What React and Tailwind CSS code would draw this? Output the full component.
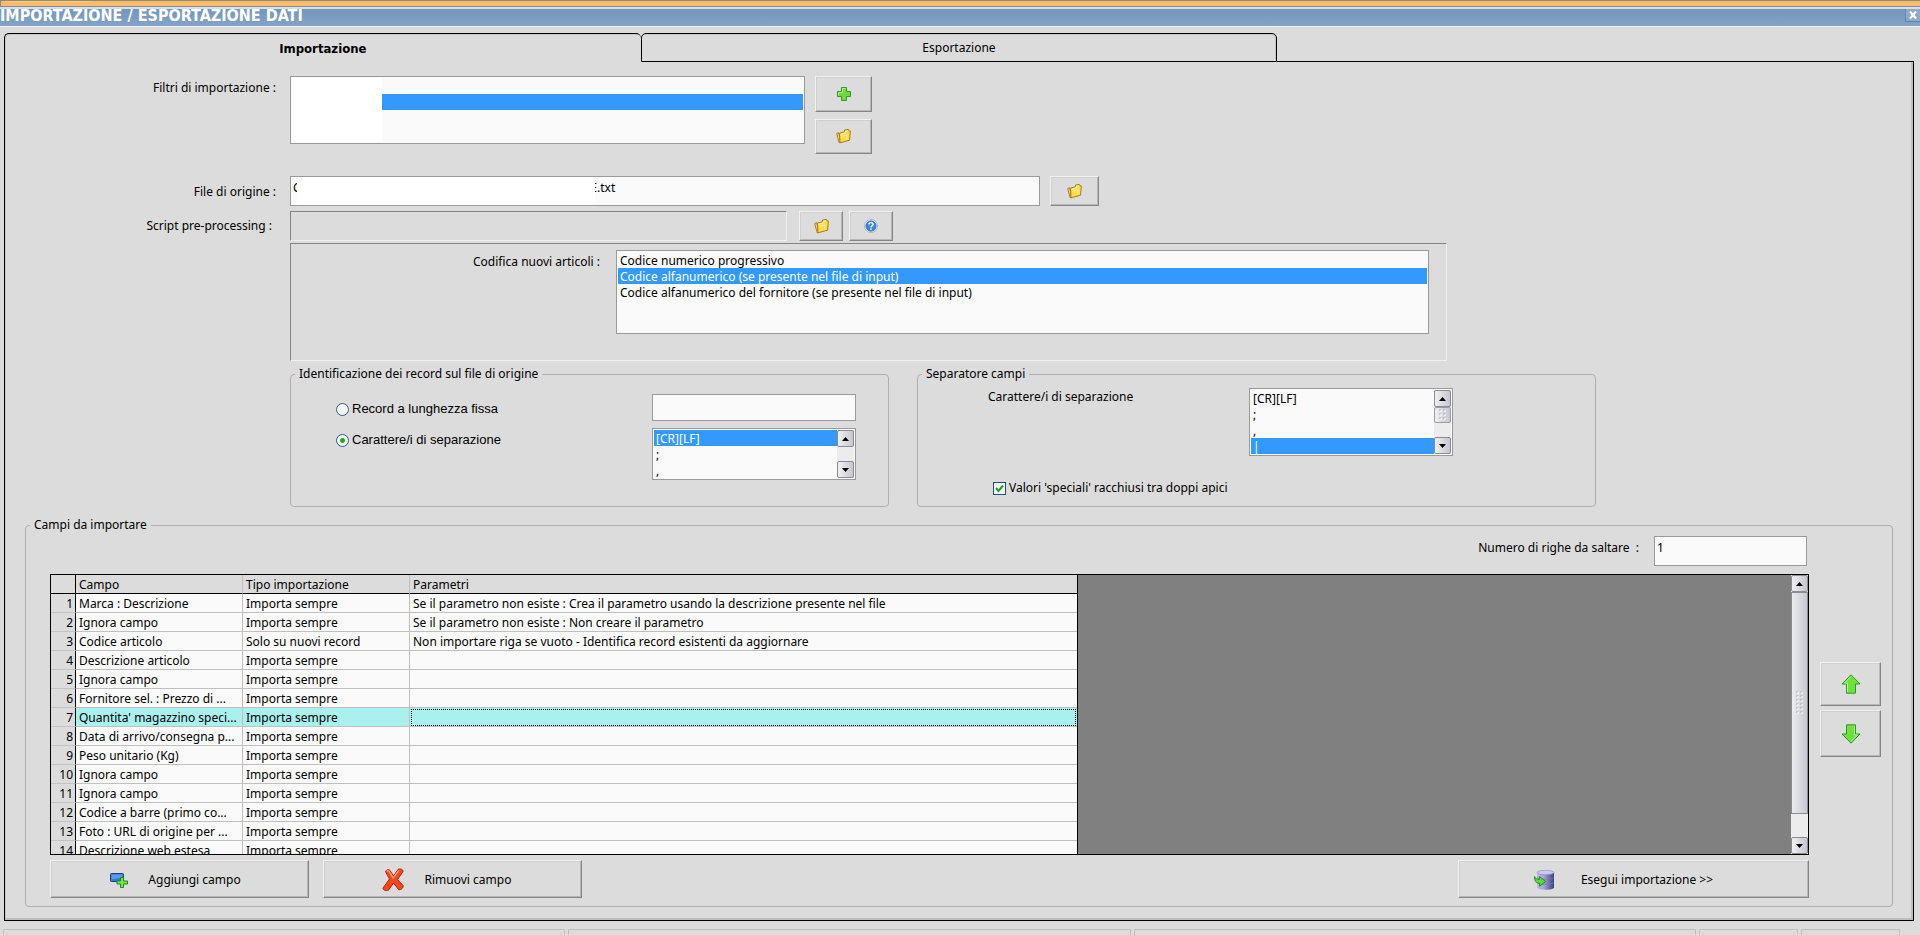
import React, { useState } from 'react';

const righe = [
  ['Marca : Descrizione', 'Importa sempre', 'Se il parametro non esiste : Crea il parametro usando la descrizione presente nel file'],
  ['Ignora campo', 'Importa sempre', 'Se il parametro non esiste : Non creare il parametro'],
  ['Codice articolo', 'Solo su nuovi record', 'Non importare riga se vuoto - Identifica record esistenti da aggiornare'],
  ['Descrizione articolo', 'Importa sempre', ''],
  ['Ignora campo', 'Importa sempre', ''],
  ['Fornitore sel. : Prezzo di ...', 'Importa sempre', ''],
  ["Quantita' magazzino speci...", 'Importa sempre', ''],
  ['Data di arrivo/consegna p...', 'Importa sempre', ''],
  ['Peso unitario (Kg)', 'Importa sempre', ''],
  ['Ignora campo', 'Importa sempre', ''],
  ['Ignora campo', 'Importa sempre', ''],
  ['Codice a barre (primo co...', 'Importa sempre', ''],
  ['Foto : URL di origine per ...', 'Importa sempre', ''],
  ['Descrizione web estesa', 'Importa sempre', ''],
];

function PlusIcon() {
  return (
    <svg width="14" height="14" viewBox="0 0 14 14" aria-hidden="true">
      <path d="M4.5.5h5v4h4v5h-4v4h-5v-4h-4v-5h4z" fill="#6fd93f" stroke="#2f9a1f" />
      <path d="M5.5 1.5h3M5.5 1.5v4h-4v3" fill="none" stroke="#b5f08f" />
    </svg>
  );
}

function FolderIcon() {
  return (
    <svg width="15" height="15" viewBox="0 0 15 15" aria-hidden="true">
      <path d="M.7 4.500l2-.8 1.800 9.500-1.200.8z" fill="#ffe98a" stroke="#a87b1c" strokeLinejoin="round" />
      <path d="M3.500 4.200l4.700-1.400.4-1.800 3.800-.6.4 1.300 1.500.3-.7 9.200-9.600 2.600z" fill="#fbdc4a" stroke="#a87b1c" strokeLinejoin="round" />
      <path d="M4.600 5.400l4.400-1.400.6-1.900 2.200-.3" fill="none" stroke="#fff6b8" />
      <path d="M5.500 7.400l5.500-1.600-.6 4.800" fill="none" stroke="#fff2a0" />
    </svg>
  );
}

function HelpIcon() {
  return (
    <svg width="14" height="14" viewBox="0 0 14 14" aria-hidden="true">
      <circle cx="7" cy="7" r="6.5" fill="#f2f5fa" stroke="#aab4c6" />
      <circle cx="7" cy="7" r="5.2" fill="#3f86d8" stroke="#2d6bb5" strokeWidth=".6" />
      <path d="M5 5.600c0-2.600 4-2.600 4-.2 0 1.500-2 1.400-2 3" fill="none" stroke="#fff" strokeWidth="1.400" />
      <path d="M6.200 9.400h1.600v1.400H6.200z" fill="#fff" />
    </svg>
  );
}

function AddFieldIcon() {
  return (
    <svg width="18" height="16" viewBox="0 0 18 16" aria-hidden="true">
      <rect x=".5" y="1.500" width="13" height="8" rx="1" fill="#2f78d0" stroke="#173f86" />
      <path d="M1.500 2.500h11v3l-11 2z" fill="#5b9be6" />
      <path d="M10.500 5.500h3v3.500h4v3h-4v3.500h-3V12h-3.500V9h3.500z" fill="#7be348" stroke="#1f8a1c" />
    </svg>
  );
}

function RemoveIcon() {
  return (
    <svg width="23" height="24" viewBox="0 0 23 24" aria-hidden="true">
      <path
        d="M3.500 3.500C4.500 1.500 7 1 8 2.500l3.500 5.500 4.500-6.500c1.500-1.400 5.500 0 5 2l-5.500 8 5.500 6c1 1.500-2 5-4.500 4L11.500 15 7 21.500c-1.500 2-6.500 1-6-1.500l6.500-9z"
        fill="#f8461c"
        stroke="#b3230c"
      />
      <path d="M5 3.500c1-1 1.600-.8 2.200 0l4 6.500 5.600-7.500" fill="none" stroke="#ff9a78" strokeWidth="1.500" />
    </svg>
  );
}

function DatabaseIcon() {
  return (
    <svg width="21" height="20" viewBox="0 0 21 20" aria-hidden="true">
      <defs>
        <linearGradient id="db" x1="0" x2="1">
          <stop offset="0" stopColor="#b9bbe6" />
          <stop offset=".4" stopColor="#a2a5dc" />
          <stop offset="1" stopColor="#3e3f7c" />
        </linearGradient>
      </defs>
      <path d="M3 2.500v15c0 3 17 3 17 0v-15z" fill="url(#db)" />
      <ellipse cx="11.500" cy="2.500" rx="8.500" ry="2.200" fill="#c9cbee" stroke="#8486bb" strokeWidth=".6" />
      <path d="M3 7.500c2 2.400 15 2.400 17 0M3 12.500c2 2.400 15 2.400 17 0" fill="none" stroke="#7577b4" strokeWidth=".7" />
      <path d="M.6 6.500c.4 2 2 2.800 5 2.800V6.600l6 4.900-6 4.700v-2.900C2 13.300.2 10.500.6 6.500z" fill="#5fdc34" stroke="#1f7f1a" strokeWidth=".9" />
    </svg>
  );
}

function ArrowIcon({ down }) {
  return (
    <svg width="20" height="20" viewBox="0 0 20 20" className={down ? 'rotate-180' : ''} aria-hidden="true">
      <path d="M10 .8l9 9.200h-4.500v9.200h-9V10H1z" fill="#6fe03c" stroke="#2f9a2a" />
      <path d="M10 2.600L3.800 9h2.700v9" fill="none" stroke="#b4f58e" />
    </svg>
  );
}

function Button3D({ className = '', children, ...props }) {
  return (
    <button
      type="button"
      className={`flex items-center justify-center border border-t-[#f2f2f2] border-l-[#f2f2f2] border-r-[#858585] border-b-[#858585] bg-[#dcdcdc] shadow-[inset_-1px_-1px_0_#b8b8b8,inset_1px_1px_0_#cfcfcf] ${className}`}
      {...props}
    >
      {children}
    </button>
  );
}

function ScrollButton({ down }) {
  return (
    <button
      type="button"
      aria-label={down ? 'Scorri giù' : 'Scorri su'}
      className="flex h-[17px] w-full shrink-0 items-center justify-center rounded-[2px] border border-[#8b8b90] bg-linear-to-r from-[#f0f0f4] to-[#c6c6d0]"
    >
      <svg width="7" height="4" viewBox="0 0 7 4" className={down ? 'rotate-180' : ''} aria-hidden="true">
        <path d="M3.500 0L7 4H0z" fill="#000" />
      </svg>
    </button>
  );
}

function Grip({ rows }) {
  return (
    <svg width="7" height={rows * 4} aria-hidden="true">
      {Array.from({ length: rows }, (_, i) => (
        <g key={i}>
          <path d={`M0 ${i * 4 + 1}h2M4 ${i * 4 + 1}h2`} stroke="#a9a9b2" />
          <path d={`M1 ${i * 4 + 2}h2M5 ${i * 4 + 2}h2`} stroke="#fff" />
        </g>
      ))}
    </svg>
  );
}

function ListBox({ options, selected, className = '', scrollbar, thumb, ...props }) {
  return (
    <div className={`flex border border-[#9a9a9a] bg-[#fafafa] p-px ${className}`}>
      <select
        size={4}
        defaultValue={selected}
        className="h-full min-w-0 flex-1 appearance-none overflow-hidden bg-transparent outline-none [scrollbar-width:none]"
        {...props}
      >
        {options.map((o) => (
          <option
            key={o}
            value={o}
            className="h-4 min-h-4 px-[2px] py-0 leading-4 checked:bg-[linear-gradient(#3399ff,#3399ff)] checked:[-webkit-text-fill-color:#fff]"
          >
            {o}
          </option>
        ))}
      </select>
      {scrollbar && (
        <div className="flex w-[17px] flex-col justify-between bg-[#ececec]">
          <ScrollButton />
          {thumb && (
            <div className="mb-auto flex h-4 items-center justify-center rounded-[2px] border border-[#9b9ba2] bg-linear-to-r from-[#f0f0f4] to-[#c6c6d0]">
              <Grip rows={3} />
            </div>
          )}
          <ScrollButton down />
        </div>
      )}
    </div>
  );
}

function GroupBox({ title, className = '', children }) {
  return (
    <fieldset className={`min-w-0 rounded-[4px] border border-[#b0b0b0] ${className}`}>
      <legend className="ml-1 px-1 leading-4">{title}</legend>
      {children}
    </fieldset>
  );
}

function App() {
  const [tipo, setTipo] = useState('separatore');

  const labelCol = 'w-[285px] shrink-0 pr-[14px] text-right';
  const radio =
    'size-[13px] shrink-0 appearance-none rounded-full border border-[#2f5c85] bg-[#f6f6f6] checked:bg-[radial-gradient(circle,#2aa52a_0_2px,#f6f6f6_3px)]';

  return (
    <div className="flex min-h-screen flex-col overflow-hidden bg-[#dcdcdc] font-['Noto_Sans','DejaVu_Sans_Condensed',sans-serif] text-[12px] leading-4 text-black">
      <div className="h-[7px] border-y border-l border-[#8a8a8a] bg-[#ffbb66]">
        <div className="ml-1 h-px w-[85px] bg-[#ffd27a]" />
      </div>
      <header className="flex h-5 items-start justify-between border-t-2 border-b border-t-[#cfe0f2] border-b-[#eef3f8] bg-linear-to-b from-[#7496bc] to-[#84a4c6]">
        <h1 className="font-['DejaVu_Sans_Condensed',sans-serif] text-[16px] leading-[14px] font-bold text-white">IMPORTAZIONE / ESPORTAZIONE DATI</h1>
        <button
          type="button"
          aria-label="Chiudi"
          className="flex h-[13px] w-[15px] items-center justify-center border-b border-l border-[#6285ab] bg-[#8fabc9]"
        >
          <svg width="8" height="8" viewBox="0 0 8 8" aria-hidden="true">
            <path d="M1 .5l6 7M7 .5l-6 7" stroke="#fff" strokeWidth="2" />
          </svg>
        </button>
      </header>

      <main className="mt-[6px] mr-[6px] ml-1">
        <div role="tablist" className="flex h-[29px]">
          <button
            type="button"
            role="tab"
            aria-selected="true"
            className="w-1/3 rounded-t-[5px] border-t border-l border-black pt-px font-['DejaVu_Sans_Condensed',sans-serif] text-[13px] font-bold shadow-[inset_1px_1px_0_#c8c8c8]"
          >
            Importazione
          </button>
          <button
            type="button"
            role="tab"
            aria-selected="false"
            className="w-1/3 rounded-t-[5px] border border-black shadow-[inset_-1px_1px_0_#c8c8c8]"
          >
            Esportazione
          </button>
          <div className="flex-1 border-b border-black" />
        </div>

        <div className="border-x border-b border-black pt-[14px] pb-[13px] shadow-[inset_-2px_-2px_0_#bdbdbd,inset_1px_0_0_#c8c8c8]">
          <div className="flex items-start">
            <label htmlFor="filtri" className={`${labelCol} pt-1`}>Filtri di importazione :</label>
            <div className="flex h-[68px] w-[515px] flex-col border border-[#9a9a9a] bg-[#fafafa] p-px">
              <select id="filtri" size={4} defaultValue="2" className="h-full w-full appearance-none overflow-hidden bg-[linear-gradient(#fff,#fff)] bg-[length:90px_100%] bg-no-repeat pl-[90px] outline-none [scrollbar-width:none]">
                {['1', '2', '3', '4'].map((v) => (
                  <option
                    key={v}
                    value={v}
                    aria-label={`Filtro ${v}`}
                    className="h-4 min-h-4 p-0 leading-4 checked:bg-[linear-gradient(#3399ff,#3399ff)]"
                  />
                ))}
              </select>
            </div>
            <div className="ml-[10px] flex flex-col gap-[7px]">
              <Button3D className="h-9 w-[57px]" aria-label="Nuovo filtro"><PlusIcon /></Button3D>
              <Button3D className="h-[35px] w-[57px]" aria-label="Apri filtro"><FolderIcon /></Button3D>
            </div>
          </div>

          <div className="mt-[22px] flex">
            <label htmlFor="file" className={`${labelCol} pt-2`}>File di origine :</label>
            <div className="flex h-[30px] w-[750px] border border-[#9a9a9a] bg-[#fafafa] pt-[3px] pl-[2px]">
              <span className="w-[4px] overflow-hidden" aria-hidden="true">C</span>
              <div className="-mt-[3px] h-7 w-[298px] bg-white" />
              <span className="flex w-[2px] justify-end overflow-hidden" aria-hidden="true">E</span>
              <input id="file" defaultValue=".txt" className="h-4 min-w-0 flex-1 bg-transparent outline-none" />
            </div>
            <Button3D className="ml-[10px] h-[30px] w-[49px]" aria-label="Sfoglia file di origine"><FolderIcon /></Button3D>
          </div>

          <div className="mt-[5px] flex">
            <label htmlFor="script" className="w-[285px] shrink-0 pt-[7px] pr-[18px] text-right">Script pre-processing :</label>
            <input id="script" className="h-[30px] w-[497px] border border-t-[#858585] border-r-[#efefef] border-b-[#efefef] border-l-[#858585] bg-transparent px-1 outline-none" />
            <Button3D className="ml-3 h-[30px] w-11" aria-label="Sfoglia script"><FolderIcon /></Button3D>
            <Button3D className="ml-[6px] h-[30px] w-11" aria-label="Aiuto"><HelpIcon /></Button3D>
          </div>

          <div className="mt-[2px] ml-[285px] flex h-[118px] w-[1157px] items-start border border-t-[#858585] border-r-[#efefef] border-b-[#efefef] border-l-[#858585] pt-[6px]">
            <label htmlFor="codifica" className="w-[325px] shrink-0 pt-1 pr-[16px] text-right">Codifica nuovi articoli :</label>
            <ListBox
              id="codifica"
              className="mr-[17px] h-[84px] flex-1"
              selected="Codice alfanumerico (se presente nel file di input)"
              options={[
                'Codice numerico progressivo',
                'Codice alfanumerico (se presente nel file di input)',
                'Codice alfanumerico del fornitore (se presente nel file di input)',
              ]}
            />
          </div>

          <div className="mt-[5px] ml-[285px] flex gap-[28px]">
            <GroupBox title="Identificazione dei record sul file di origine" className="h-[141px] w-[599px]">
              <div className="flex items-start pt-3 pl-[45px] font-['Liberation_Sans',sans-serif] text-[13px]">
                <label className="flex w-[316px] items-center gap-[3px] pt-[7px]">
                  <input type="radio" name="tipo" className={radio} checked={tipo === 'fissa'} onChange={() => setTipo('fissa')} />
                  Record a lunghezza fissa
                </label>
                <input aria-label="Lunghezza record" className="h-[27px] w-[204px] border border-[#9a9a9a] bg-[#fafafa] px-1 outline-none" />
              </div>
              <div className="flex items-start pt-[7px] pl-[45px]">
                <label className="flex w-[316px] items-center gap-[3px] pt-1 font-['Liberation_Sans',sans-serif] text-[13px]">
                  <input type="radio" name="tipo" className={radio} checked={tipo === 'separatore'} onChange={() => setTipo('separatore')} />
                  Carattere/i di separazione
                </label>
                <ListBox aria-label="Separatore record" className="h-[52px] w-[204px]" options={['[CR][LF]', ';', ',']} selected="[CR][LF]" scrollbar />
              </div>
            </GroupBox>

            <GroupBox title="Separatore campi" className="h-[141px] w-[679px]">
              <div className="flex items-start pt-[6px] pl-[70px]">
                <label htmlFor="sepcampi" className="w-[261px] pt-px">Carattere/i di separazione</label>
                <ListBox id="sepcampi" className="h-[68px] w-[204px]" options={['[CR][LF]', ';', ',', '|']} selected="|" scrollbar thumb />
              </div>
              <label className="mt-6 ml-[75px] flex w-fit items-center gap-[3px]">
                <span className="grid place-items-center">
                  <input
                    type="checkbox"
                    defaultChecked
                    className="peer col-start-1 row-start-1 size-[13px] appearance-none border border-[#1c5180] bg-[#f6f6f6]"
                  />
                  <svg width="9" height="9" viewBox="0 0 9 9" className="pointer-events-none invisible col-start-1 row-start-1 peer-checked:visible" aria-hidden="true">
                    <path d="M1 4l2.500 3L8 1.500" fill="none" stroke="#21a121" strokeWidth="2" />
                  </svg>
                </span>
                Valori 'speciali' racchiusi tra doppi apici
              </label>
            </GroupBox>
          </div>

          <GroupBox title="Campi da importare" className="mt-[10px] mr-5 ml-5 h-[390px]">
            <div className="flex pr-[11px] pl-6">
              <div className="min-w-0 flex-1">
                <div className="flex justify-end pt-[3px] pr-[2px]">
                  <label htmlFor="salta" className="pt-1 pr-[15px] whitespace-pre">Numero di righe da saltare  :</label>
                  <input id="salta" defaultValue="1" className="h-[30px] w-[153px] border border-[#9a9a9a] bg-[#fafafa] px-[2px] pb-2 outline-none" />
                </div>

                <div className="mt-2 flex h-[281px] overflow-hidden border border-black bg-[#808080]">
                  <div className="w-[1027px] shrink-0 overflow-hidden border-r border-black">
                    <table className="w-full table-fixed border-separate border-spacing-0">
                      <colgroup>
                        <col className="w-[25px]" />
                        <col className="w-[167px]" />
                        <col className="w-[167px]" />
                        <col />
                      </colgroup>
                      <thead>
                        <tr className="h-[19px] bg-[#dcdcdc] text-left">
                          <th className="border-r border-b border-black p-0" aria-label="Riga" />
                          <th className="border-r border-b border-r-[#c0c0c0] border-b-black p-0 pt-px pl-[3px] font-normal">Campo</th>
                          <th className="border-r border-b border-r-[#c0c0c0] border-b-black p-0 pt-px pl-[3px] font-normal">Tipo importazione</th>
                          <th className="border-b border-black p-0 pt-px pl-[3px] font-normal">Parametri</th>
                        </tr>
                      </thead>
                      <tbody>
                        {righe.map(([campo, tipoImp, param], i) => (
                          <tr key={i} className={`h-[19px] ${i === 6 ? 'bg-[#aaf0ee]' : 'bg-[#fafafa]'}`}>
                            <td className="border-r border-b border-r-black border-b-[#c4c4c4] bg-[#dcdcdc] p-0 pt-px pr-[2px] text-right">{i + 1}</td>
                            <td className="overflow-hidden border-r border-b border-[#c0c0c0] p-0 pt-px pl-[3px] whitespace-nowrap">{campo}</td>
                            <td className="border-r border-b border-[#c0c0c0] p-0 pt-px pl-[3px] whitespace-nowrap">{tipoImp}</td>
                            <td className={`border-b border-[#c0c0c0] p-0 pt-px pl-[3px] whitespace-nowrap ${i === 6 ? 'outline-1 -outline-offset-2 outline-black outline-dotted' : ''}`}>{param}</td>
                          </tr>
                        ))}
                      </tbody>
                    </table>
                  </div>
                  <div className="ml-auto flex w-[17px] flex-col bg-[#ececec]">
                    <ScrollButton />
                    <div className="flex h-[222px] items-center justify-center border border-[#8b8b90] bg-linear-to-r from-[#ebebf0] to-[#c8c8d2]">
                      <Grip rows={6} />
                    </div>
                    <div className="mt-auto">
                      <ScrollButton down />
                    </div>
                  </div>
                </div>

                <div className="mt-[5px] flex gap-[14px]">
                  <Button3D className="h-[38px] w-[259px] gap-5 pt-[2px] pr-2">
                    <AddFieldIcon />
                    Aggiungi campo
                  </Button3D>
                  <Button3D className="h-[38px] w-[259px] gap-5 pt-[2px] pr-3">
                    <RemoveIcon />
                    Rimuovi campo
                  </Button3D>
                  <Button3D className="ml-auto h-[38px] w-[351px] gap-[26px] pt-[2px] pr-5">
                    <DatabaseIcon />
                    Esegui importazione &gt;&gt;
                  </Button3D>
                </div>
              </div>

              <div className="mt-[129px] ml-[11px] flex w-[61px] flex-col gap-1">
                <Button3D className="h-11" aria-label="Sposta su"><ArrowIcon /></Button3D>
                <Button3D className="h-[47px]" aria-label="Sposta giù"><ArrowIcon down /></Button3D>
              </div>
            </div>
          </GroupBox>
        </div>
      </main>

      <footer className="mt-2 mr-5 ml-[3px] flex h-[7px] gap-[3px]">
        <div className="flex-1 border border-b-0 border-[#c0c0c0]" />
        <div className="flex-1 border border-b-0 border-[#c0c0c0]" />
        <div className="flex-1 border border-b-0 border-[#c0c0c0]" />
        <div className="w-[99px] border border-b-0 border-[#c0c0c0]" />
        <div className="w-[99px] border border-b-0 border-[#c0c0c0]" />
      </footer>
    </div>
  );
}

export default App;
